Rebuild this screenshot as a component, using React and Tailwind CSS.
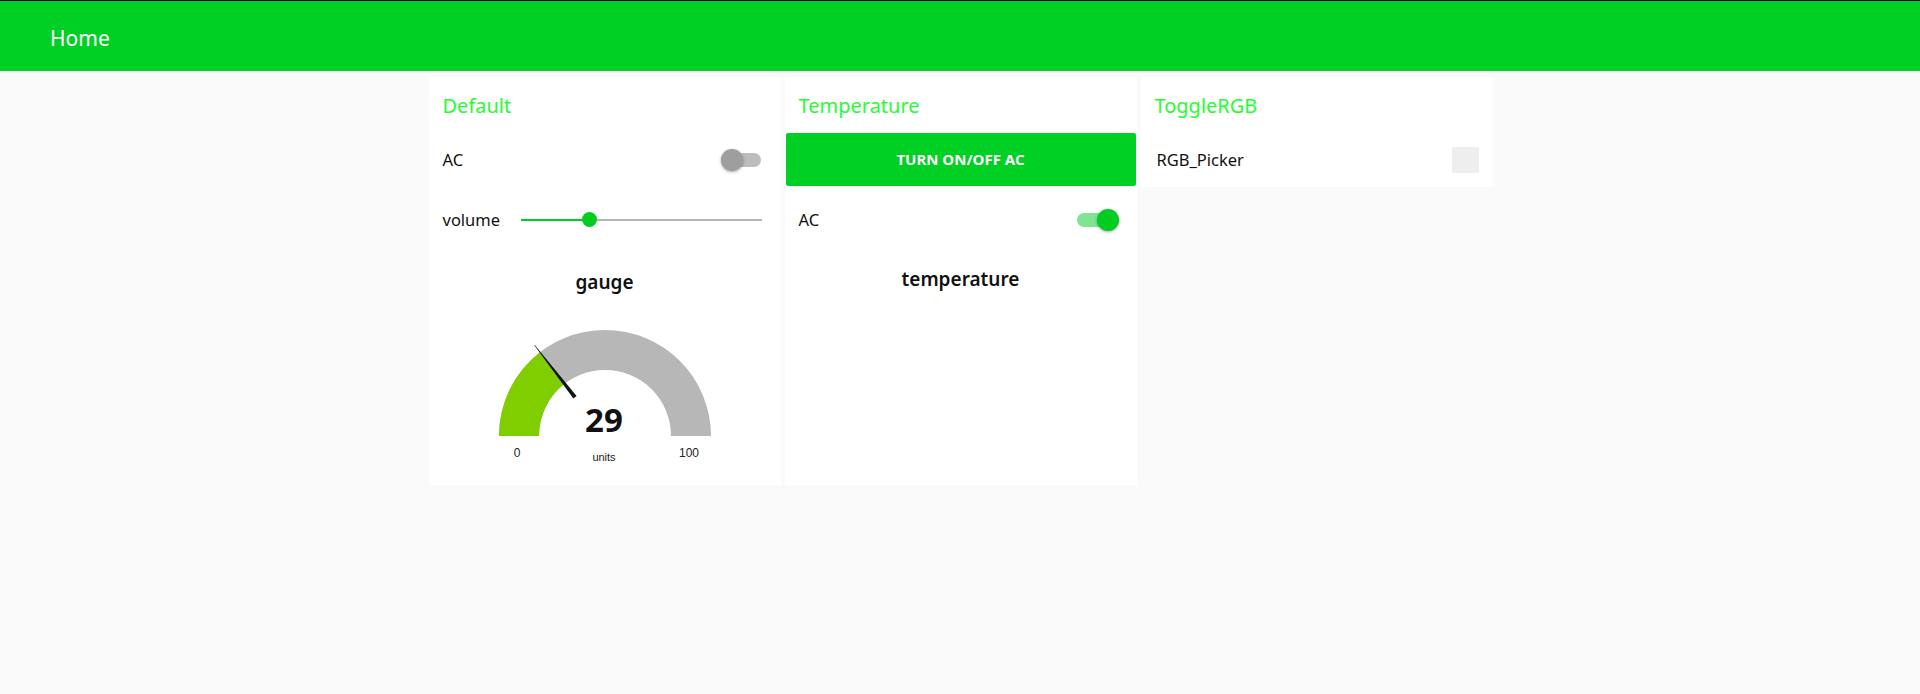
import React from "react";

const FONT = { fontFamily: '"Noto Sans", "Open Sans", sans-serif' };

function Toggle({ on }) {
  return (
    <div className="relative w-[40px] h-[24px] flex items-center">
      <div
        className={
          "absolute right-[2px] w-[36px] h-[14px] rounded-full " +
          (on ? "bg-[#80e592] left-[0px]" : "bg-[#bdbdbd] left-[4px]")
        }
      />
      <div
        className={
          "absolute w-[22px] h-[22px] rounded-full shadow-[0_1px_3px_rgba(0,0,0,0.35)] " +
          (on ? "bg-[#00cc22] right-[-2px]" : "bg-[#9e9e9e] left-[0px]")
        }
      />
    </div>
  );
}

function Title({ children }) {
  return (
    <div className="h-[56px] flex items-center pl-[14px] pt-[2px] text-[20px] text-[#22ff2e]">
      {children}
    </div>
  );
}

function Gauge() {
  return (
    <svg width="352" height="172" viewBox="0 0 352 172" className="block">
      <path d="M70,125 A106,106 0 0 1 282,125 L242,125 A66,66 0 0 0 110,125 Z" fill="#b7b7b7" />
      <path d="M70,125 A106,106 0 0 1 111.03,41.24 L135.55,72.85 A66,66 0 0 0 110,125 Z" fill="#80cd00" />
      <polygon points="147.55,85.05 144.39,87.51 105.28,34.31 105.76,33.95" fill="#111" />
      <text x="175" y="120.5" textAnchor="middle" fontFamily='"Noto Sans", sans-serif' fontWeight="700" fontSize="33" fill="#111">29</text>
      <text x="88" y="145.5" textAnchor="middle" fontFamily='"Liberation Sans", Arial, sans-serif' fontSize="12" fill="#222">0</text>
      <text x="260" y="145.5" textAnchor="middle" fontFamily='"Liberation Sans", Arial, sans-serif' fontSize="12" fill="#222">100</text>
      <text x="175" y="149.5" textAnchor="middle" fontFamily='"Liberation Sans", Arial, sans-serif' fontSize="11" fill="#222">units</text>
    </svg>
  );
}

export default function App() {
  return (
    <div className="min-h-[694px] bg-[#fafafa] text-[#111]" style={FONT}>
      <header className="h-[71px] border-t border-black bg-[#00cf24] flex items-center pl-[50px]">
        <span className="text-[21px] text-white pt-[5px]">Home</span>
      </header>
      <main className="flex justify-center items-start gap-[4px] pt-[6px] pl-[1px]">
        {/* Default */}
        <section className="w-[352px] h-[408px] bg-white flex flex-col">
          <Title>Default</Title>
          <div className="h-[54px] flex items-center justify-between pl-[14px] pr-[20px]">
            <span className="text-[16.5px]">AC</span>
            <Toggle on={false} />
          </div>
          <div className="h-[66px] flex items-center pl-[14px] pr-[19px]">
            <span className="text-[16.5px] w-[78px]">volume</span>
            <div className="relative flex-1 h-[16px] flex items-center">
              <div className="h-[2px] w-[29%] bg-[#00cc22]" />
              <div className="h-[2px] flex-1 bg-[#b5b5b5]" />
              <div className="absolute left-[calc(29%-8px)] top-[0px] w-[15px] h-[15px] rounded-full bg-[#00cc22]" />
            </div>
          </div>
          <div className="h-[58px] flex items-center justify-center text-[19px] font-semibold">gauge</div>
          <Gauge />
        </section>

        {/* Temperature */}
        <section className="w-[352px] h-[408px] bg-white flex flex-col">
          <Title>Temperature</Title>
          <button className="mx-[1px] h-[53px] bg-[#00cf24] rounded-[2px] text-white text-[15px] font-bold flex items-center justify-center">
            TURN ON/OFF AC
          </button>
          <div className="h-[68px] flex items-center justify-between pl-[14px] pr-[20px]">
            <span className="text-[16.5px]">AC</span>
            <Toggle on={true} />
          </div>
          <div className="h-[50px] flex items-center justify-center text-[19px] font-semibold">temperature</div>
        </section>

        {/* ToggleRGB */}
        <section className="w-[352px] h-[110px] bg-white flex flex-col">
          <Title>ToggleRGB</Title>
          <div className="h-[54px] flex items-center justify-between pl-[16px] pr-[14px]">
            <span className="text-[16.5px]">RGB_Picker</span>
            <div className="w-[27px] h-[26px] bg-[#eeeeee]" />
          </div>
        </section>
      </main>
    </div>
  );
}
